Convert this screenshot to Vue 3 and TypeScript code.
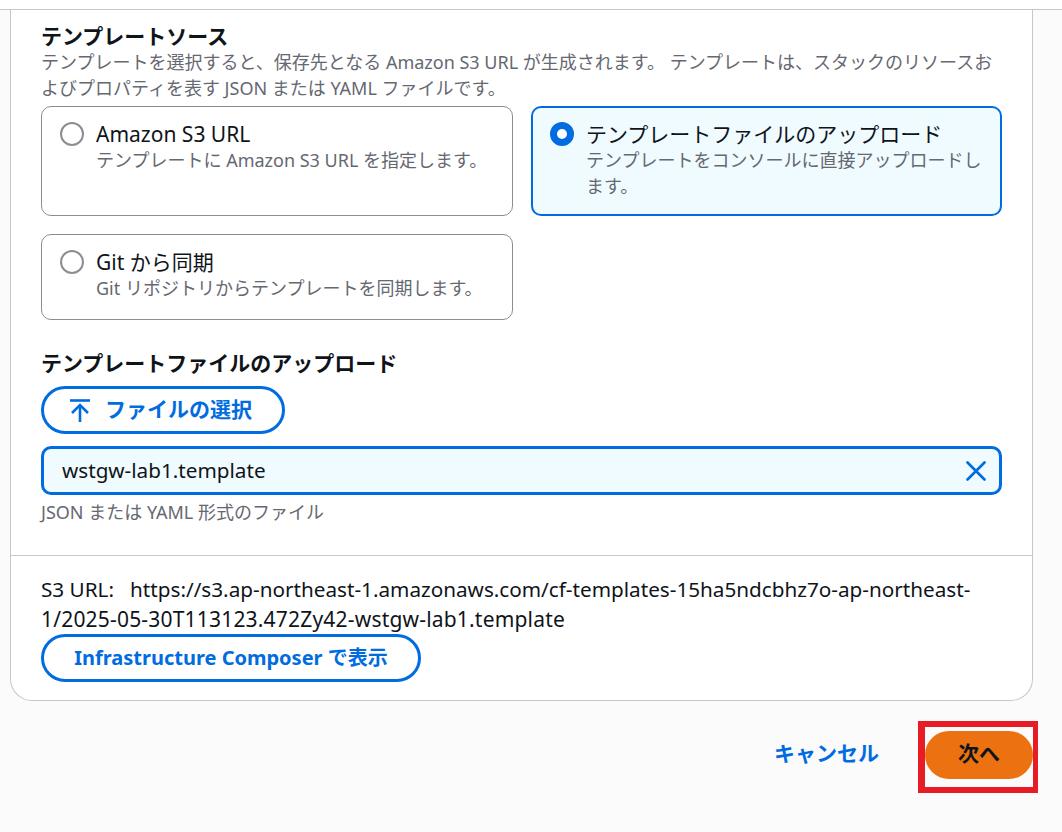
<script setup lang="ts">
import { ref } from 'vue';

type SourceOption = { id: string; title: string; desc: string };

const options: SourceOption[] = [
  { id: 's3', title: 'Amazon S3 URL', desc: 'テンプレートに Amazon S3 URL を指定します。' },
  { id: 'upload', title: 'テンプレートファイルのアップロード', desc: 'テンプレートをコンソールに直接アップロードします。' },
  { id: 'git', title: 'Git から同期', desc: 'Git リポジトリからテンプレートを同期します。' },
];

const selected = ref('upload');
</script>

<template>
  <div class="page">
    <div class="strip"></div>
    <div class="content">
      <section class="panel">
        <div class="body">
          <h2 class="label">テンプレートソース</h2>
          <p class="hint">テンプレートを選択すると、保存先となる Amazon S3 URL が生成されます。 テンプレートは、スタックのリソースおよびプロパティを表す JSON または YAML ファイルです。</p>
          <div class="tiles">
            <label
              v-for="opt in options"
              :key="opt.id"
              class="tile"
              :class="{ active: selected === opt.id }"
              @click="selected = opt.id"
            >
              <span class="radio"></span>
              <span class="tile-text">
                <span class="tile-title">{{ opt.title }}</span>
                <span class="tile-desc">{{ opt.desc }}</span>
              </span>
            </label>
          </div>

          <h2 class="label upload-label">テンプレートファイルのアップロード</h2>
          <button class="btn choose">
            <svg width="20" height="23" viewBox="0 0 20 23" fill="none" stroke="currentColor" stroke-width="2.6">
              <path d="M0 1.500h20" />
              <path d="M10 23V6" />
              <path d="M2 14l8-8 8 8" />
            </svg>
            ファイルの選択
          </button>
          <div class="file">
            <span>wstgw-lab1.template</span>
            <svg width="20" height="20" viewBox="0 0 20 20" fill="none" stroke="currentColor" stroke-width="2.6" stroke-linecap="round">
              <path d="M1.500 1.500l17 17M18.500 1.500l-17 17" />
            </svg>
          </div>
          <p class="constraint">JSON または YAML 形式のファイル</p>
        </div>
        <div class="footer">
          <p class="url">S3 URL:&nbsp;&nbsp; https://s3.ap-northeast-1.amazonaws.com/cf-templates-15ha5ndcbhz7o-ap-northeast-<span class="url-tail">1/2025-05-30T113123.472Zy42-wstgw-lab1.template</span></p>
          <button class="btn composer">Infrastructure Composer で表示</button>
        </div>
      </section>
      <div class="actions">
        <button class="cancel">キャンセル</button>
        <div class="highlight">
          <button class="next">次へ</button>
        </div>
      </div>
    </div>
  </div>
</template>

<style>
html, body {
  background: #fbfbfc;
}
</style>

<style scoped>
.page {
  width: 1062px;
  height: 832px;
  overflow: hidden;
  font-family: "Noto Sans", "Noto Sans CJK JP", sans-serif;
  color: #0f141a;
  background: #fbfbfc;
}
.strip {
  height: 9px;
  background: #fff;
  border-bottom: 1px solid #c6c6c6;
}
.content {
  padding-left: 10px;
}
.panel {
  width: 1023px;
  height: 691px;
  box-sizing: border-box;
  background: #fff;
  border: 1px solid #c6c6cd;
  border-top: 0;
  border-radius: 0 0 22px 22px;
  display: flex;
  flex-direction: column;
}
.body {
  padding: 13px 30px 0;
  height: 546px;
  box-sizing: border-box;
  border-bottom: 1px solid #c6c6cd;
}
.label {
  margin: 0;
  font-size: 21px;
  line-height: 26px;
  font-weight: 700;
}
.hint {
  margin: 0;
  font-size: 18px;
  line-height: 26px;
  color: #656871;
}
.tiles {
  display: grid;
  grid-template-columns: 472px 471px;
  column-gap: 18px;
  row-gap: 18px;
  margin-top: 5px;
}
.tile {
  display: flex;
  gap: 12px;
  box-sizing: border-box;
  padding: 14px 18px 0 18px;
  border: 1px solid #8c8c94;
  border-radius: 10px;
  min-height: 86px;
}
.tile:nth-child(-n+2) {
  height: 110px;
}
.tile.active {
  border: 2px solid #006ce0;
  background: #f0fbff;
  padding: 13px 18px 0 17px;
}
.radio {
  flex: none;
  width: 24px;
  height: 24px;
  margin-top: 1px;
  box-sizing: border-box;
  border: 2px solid #8c8c94;
  border-radius: 50%;
  background: #fff;
}
.active .radio {
  border: 7px solid #006ce0;
}
.tile-text {
  display: flex;
  flex-direction: column;
}
.tile-title {
  font-size: 21px;
  line-height: 26px;
}
.tile-desc {
  font-size: 18px;
  line-height: 26px;
  color: #656871;
}
.upload-label {
  margin-top: 30px;
}
.btn {
  display: flex;
  align-items: center;
  justify-content: center;
  box-sizing: border-box;
  border: 3px solid #006ce0;
  border-radius: 24px;
  background: #fff;
  color: #006ce0;
  font: 700 20px/26px "Noto Sans", "Noto Sans CJK JP", sans-serif;
  padding: 0;
}
.choose {
  width: 244px;
  height: 48px;
  gap: 15px;
  margin-top: 10px;
  padding: 0 4px 3px 0;
  font-size: 21px;
}
.choose svg {
  margin-top: 3px;
}
.file {
  display: flex;
  align-items: center;
  justify-content: space-between;
  box-sizing: border-box;
  height: 49px;
  margin-top: 12px;
  padding: 0 13px 2px 18px;
  border: 3px solid #006ce0;
  border-radius: 10px;
  background: #f0fbff;
  font-size: 20.7px;
}
.file svg {
  color: #006ce0;
  margin-top: 2px;
}
.constraint {
  margin: 4px 0 0;
  font-size: 18px;
  line-height: 26px;
  color: #656871;
}
.footer {
  padding: 18px 30px 0;
}
.url {
  margin: 0;
  font-size: 20.7px;
  line-height: 30px;
}
.url-tail {
  font-size: 21px;
  letter-spacing: 0.19px;
}
.composer {
  width: 380px;
  height: 48px;
  padding-bottom: 1px;
}
.actions {
  display: flex;
  justify-content: flex-end;
  align-items: center;
  width: 1023px;
  margin-top: 20px;
}
.cancel {
  border: 0;
  background: none;
  padding: 0;
  margin: 0 39px 8px 0;
  color: #006ce0;
  font: 700 21px/26px "Noto Sans", "Noto Sans CJK JP", sans-serif;
}
.highlight {
  box-sizing: border-box;
  width: 120px;
  height: 72px;
  margin-right: -5px;
  border: 6px solid #e81c24;
  border-left-width: 7px;
  border-right-width: 5px;
  padding-top: 4px;
}
.next {
  display: block;
  width: 108px;
  height: 48px;
  border: 0;
  padding: 0 0 4px;
  border-radius: 24px;
  background: #ec7211;
  color: #0f141a;
  font: 700 21px/26px "Noto Sans", "Noto Sans CJK JP", sans-serif;
}
</style>
